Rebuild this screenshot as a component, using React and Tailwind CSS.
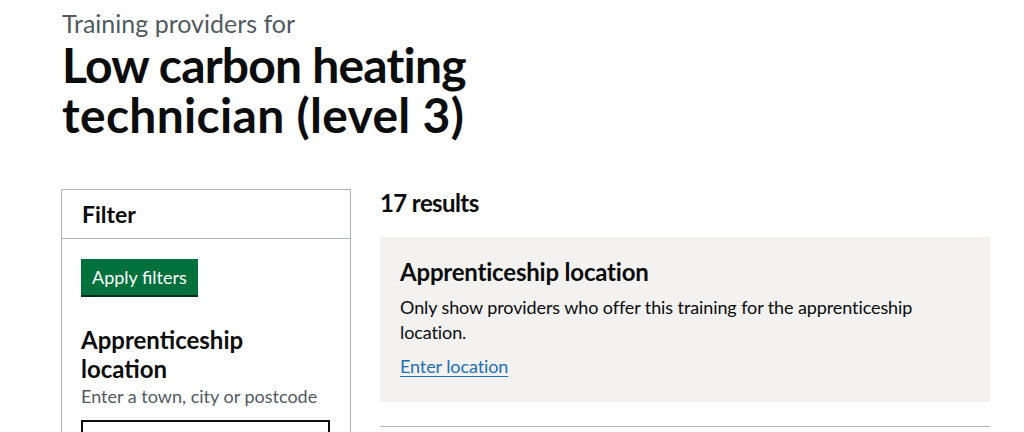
export default function App() {
  return (
    <div className="min-h-[432px] bg-white text-[#0b0c0c] font-['Lato','Liberation_Sans',sans-serif] overflow-hidden">
      <div className="pl-[62px] pr-[34px] pt-[8px]">
        <span className="block text-[25px] leading-[30px] text-[#505a5f]">Training providers for</span>
        <h1 className="text-[48px] leading-[50px] font-bold mb-[49px] mt-[2px]">
          <span className="block tracking-[-0.8px]">Low carbon heating</span>
          <span className="block tracking-[0.3px]">technician (level 3)</span>
        </h1>
        <div className="flex gap-[29px]">
          {/* Filter */}
          <div className="w-[290px] shrink-0 -ml-px border border-[#b1b4b6]">
            <div className="h-[49px] px-[20px] flex items-center border-b border-[#b1b4b6]">
              <h2 className="text-[23px] font-bold">Filter</h2>
            </div>
            <div className="px-[19px] pt-[20px]">
              <button className="bg-[#00703c] text-white text-[18px] leading-[21px] px-[11px] pt-[8px] pb-[7px] shadow-[0_2px_0_#002d18]">
                Apply filters
              </button>
              <h3 className="mt-[30px] text-[24px] leading-[29px] font-bold pr-[60px]">Apprenticeship location</h3>
              <p className="text-[18px] leading-[25px] text-[#505a5f] mt-[1px]">Enter a town, city or postcode</p>
              <div className="mt-[11px] h-[40px] w-[249px] border-2 border-[#0b0c0c]"></div>
            </div>
          </div>
          {/* Results */}
          <div className="w-[610px]">
            <h2 className="text-[24px] leading-[30px] font-bold tracking-[-0.6px] mt-[-1px]">17 results</h2>
            <div className="mt-[19px] bg-[#f3f2f1] px-[20px] pt-[20px] pb-[23px]">
              <h3 className="text-[24px] leading-[30px] font-bold tracking-[-0.2px]">Apprenticeship location</h3>
              <p className="mt-[8px] text-[18px] leading-[25px] tracking-[-0.1px]">
                Only show providers who offer this training for the apprenticeship location.
              </p>
              <a href="#" className="inline-block mt-[9px] text-[18px] leading-[25px] tracking-[-0.1px] text-[#1d70b8] underline underline-offset-[3px] decoration-1">
                Enter location
              </a>
            </div>
            <hr className="mt-[24px] border-t border-[#b1b4b6]" />
          </div>
        </div>
      </div>
    </div>
  );
}
